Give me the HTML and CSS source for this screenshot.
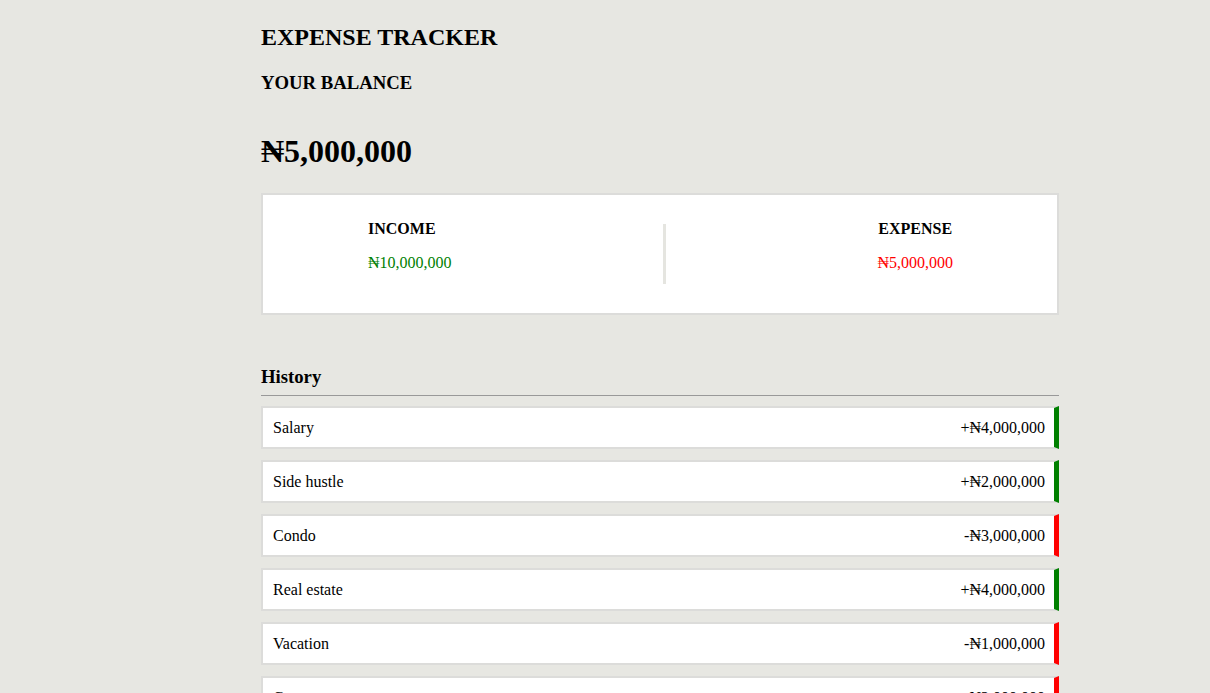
FILE: index.html
```html
<!DOCTYPE html>
<html>
<head>
<meta charset="utf-8">
<title>Expense Tracker</title>
<link rel="stylesheet" href="styles.css">
</head>
<body>
<div class="container">
  <h2 class="title">EXPENSE TRACKER</h2>
  <h4 class="balance-label">YOUR BALANCE</h4>
  <h1 class="balance">₦5,000,000</h1>
  <div class="inc-exp">
    <div class="inc">
      <h4>INCOME</h4>
      <p class="money plus">₦10,000,000</p>
    </div>
    <div class="divider"></div>
    <div class="exp">
      <h4>EXPENSE</h4>
      <p class="money minus">₦5,000,000</p>
    </div>
  </div>
  <h3 class="history">History</h3>
  <ul class="list">
    <li class="plus">Salary <span>+₦4,000,000</span></li>
    <li class="plus">Side hustle <span>+₦2,000,000</span></li>
    <li class="minus">Condo <span>-₦3,000,000</span></li>
    <li class="plus">Real estate <span>+₦4,000,000</span></li>
    <li class="minus">Vacation <span>-₦1,000,000</span></li>
    <li class="minus">Car <span>-₦2,000,000</span></li>
  </ul>
</div>
</body>
</html>
```
FILE: styles.css
```css
html, body {
  margin: 0;
  padding: 0;
}
body {
  background: #e7e7e2;
  font-family: "Liberation Serif", "DejaVu Serif", serif;
  color: #000;
  overflow: hidden;
}
.container {
  width: 798px;
  margin: 0 0 0 261px;
  padding-top: 20px;
}
.title {
  font-size: 24px;
  margin: 0;
  line-height: 35px;
}
.balance-label {
  font-size: 18.72px;
  margin: 17px 0 0;
  line-height: 22px;
}
.balance {
  font-size: 32px;
  margin: 39px 0 0;
  line-height: 37px;
}
.inc-exp {
  background: #fff;
  border: 2px solid #dcdcda;
  margin-top: 23px;
  padding: 25px 104px 29px 105px;
  display: flex;
  justify-content: space-between;
  align-items: flex-start;
}
.inc-exp h4 {
  font-size: 16px;
  margin: 0;
  line-height: 18px;
}
.exp { text-align: center; }
.money {
  font-size: 16px;
  margin: 16px 0 0;
  line-height: 18px;
}
.money.plus { color: #008000; }
.money.minus { color: #ff0000; }
.divider {
  width: 3px;
  height: 60px;
  margin-top: 4px;
  background: #e5e5e0;
}
.history {
  font-size: 18.72px;
  margin: 51px 0 0;
  padding-bottom: 7px;
  border-bottom: 1px solid #999;
  line-height: 22px;
}
.list {
  list-style: none;
  padding: 0;
  margin: 10px 0 0;
}
.list li {
  background: #fff;
  border: 2px solid #dcdcda;
  border-right: 5px solid #008000;
  display: flex;
  justify-content: space-between;
  padding: 10px 9px 10px 10px;
  font-size: 16px;
  line-height: 19px;
  margin-bottom: 11px;
}
.list li.minus { border-right-color: #ff0000; }
```
